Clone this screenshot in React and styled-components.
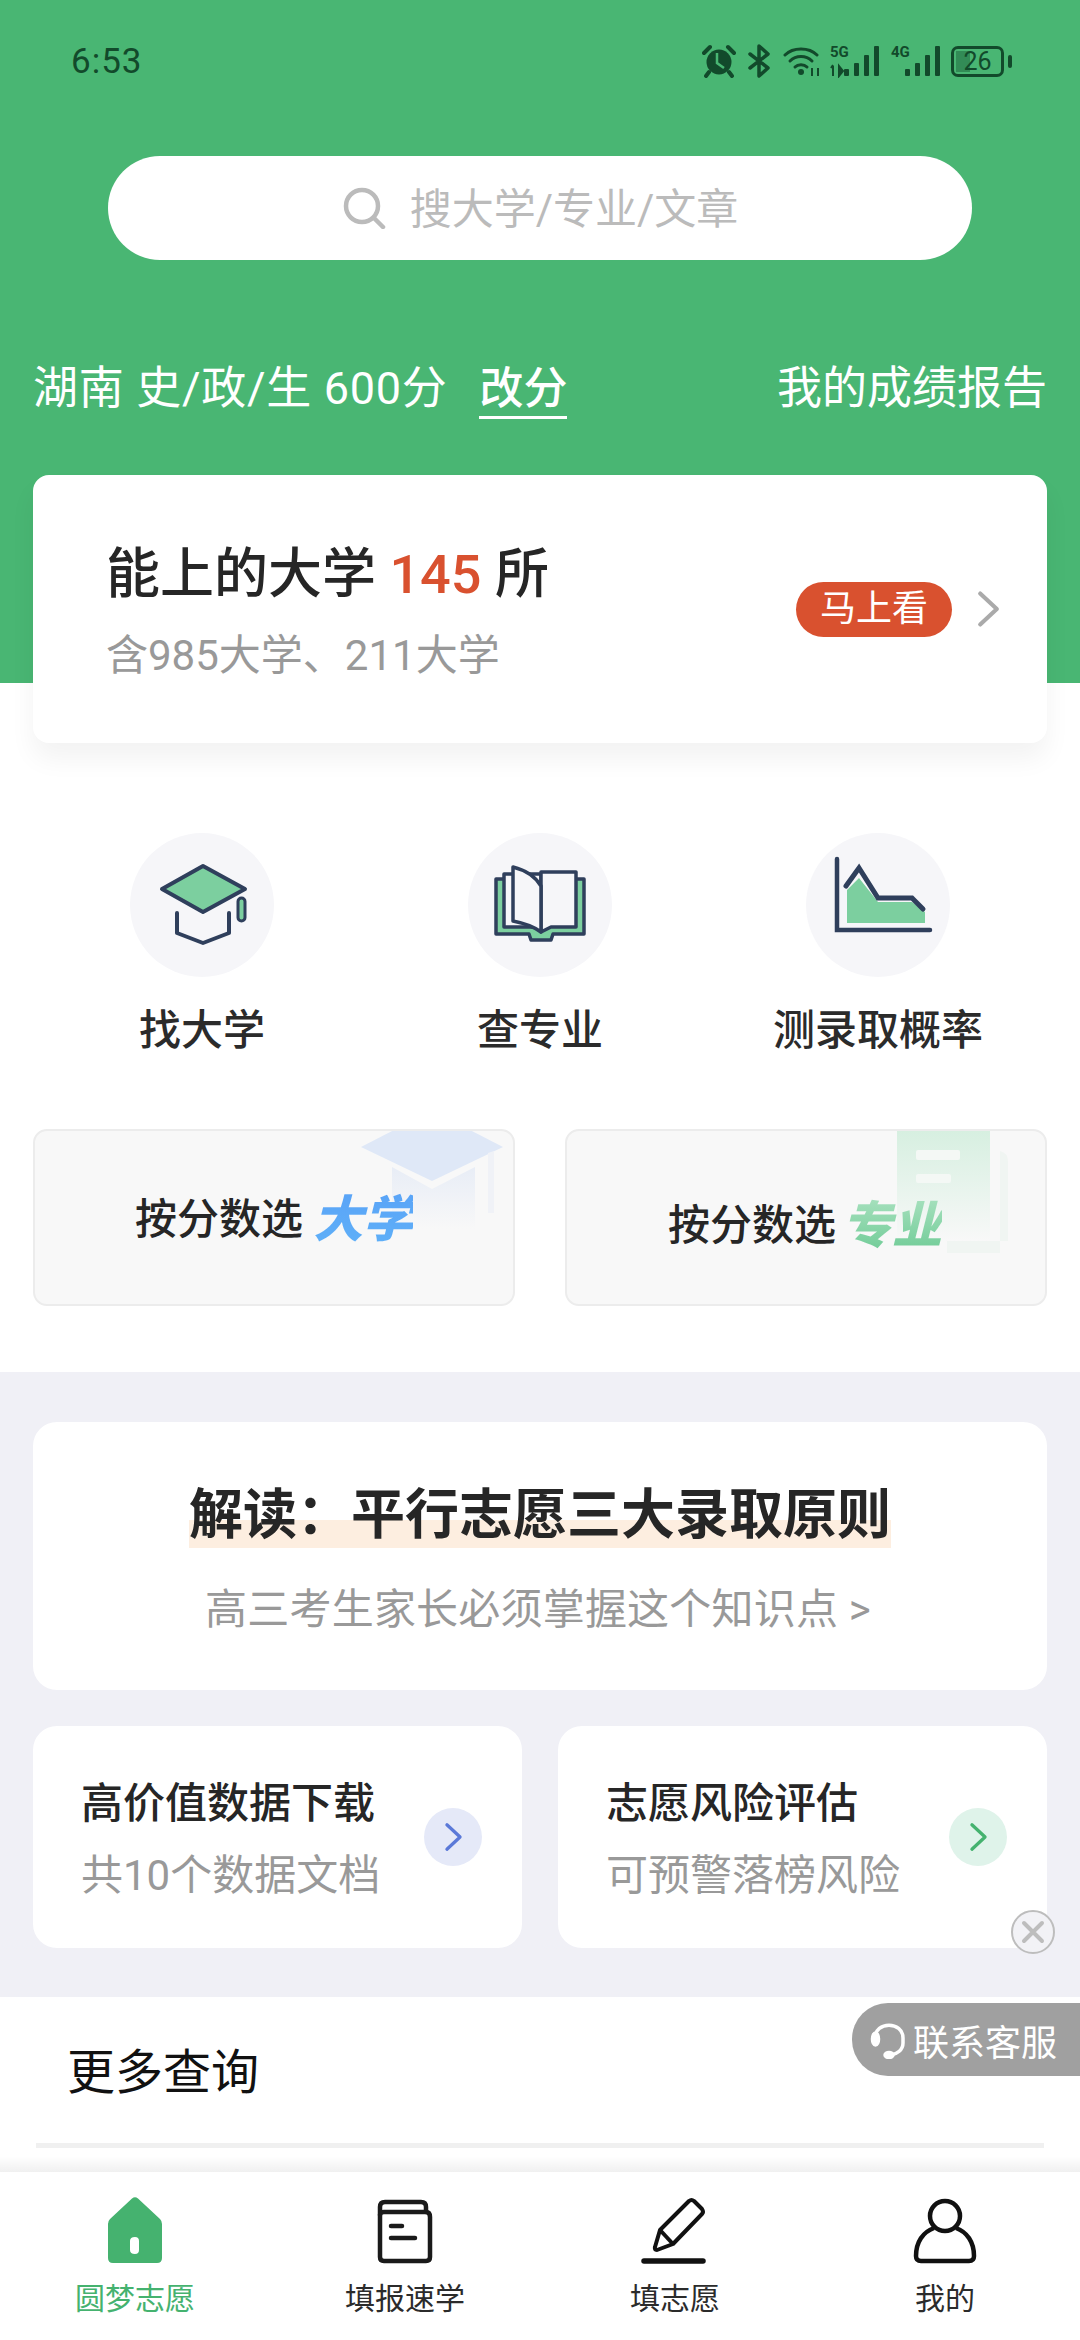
import React from 'react'
import styled, { createGlobalStyle } from 'styled-components'

const GlobalStyle = createGlobalStyle`
  html, body { margin: 0; padding: 0; background: #fff; }
  * { box-sizing: border-box; }
  body { font-family: Roboto, "Noto Sans CJK SC", sans-serif; }
`

const Page = styled.div`
  position: relative;
  width: 1080px;
  height: 2340px;
  overflow: hidden;
  display: flex;
  flex-direction: column;
  background: #fff;
`

const Top = styled.div`
  height: 1372px;
  flex: none;
  padding: 0 33px;
  background: linear-gradient(#49b673 683px, #fff 683px);
`

const StatusBar = styled.div`
  height: 122px;
  margin: 0 -33px;
  padding: 0 76px 0 71px;
  display: flex;
  align-items: center;
  justify-content: space-between;
  color: #124a2b;
`

const Time = styled.span`
  font-size: 35px;
  letter-spacing: 1px;
`

const StatusIcons = styled.div`
  display: flex;
  align-items: center;
`

const Battery = styled.div`
  position: relative;
  width: 53px;
  height: 31px;
  margin-left: 10px;
  border: 3px solid #124a2b;
  border-radius: 7px;
  display: flex;
  align-items: center;
  justify-content: center;
  font-size: 25px;
  line-height: 1;
  &::before {
    content: "";
    position: absolute;
    left: 2px;
    top: 2px;
    bottom: 2px;
    width: 14px;
    background: rgba(18, 74, 43, 0.4);
  }
  &::after {
    content: "";
    position: absolute;
    right: -11px;
    top: 6px;
    width: 4px;
    height: 13px;
    border-radius: 2px;
    background: #124a2b;
  }
`

const Search = styled.div`
  width: 864px;
  height: 104px;
  margin: 34px auto 0;
  border-radius: 52px;
  background: #fff;
  display: flex;
  align-items: center;
  justify-content: center;
  gap: 24px;
  color: #bbb;
  font-size: 42px;
  line-height: 56px;
`

const SearchText = styled.span`
  margin-top: 3px;
`

const InfoRow = styled.div`
  height: 60px;
  margin: 99px 0 0;
  display: flex;
  align-items: center;
  justify-content: space-between;
  color: #fff;
  font-size: 45px;
  line-height: 60px;
`

const InfoLeft = styled.div`
  display: flex;
  align-items: center;
  gap: 32px;
`

const InfoText = styled.span`
  letter-spacing: 0.7px;
`

const ChangeScore = styled.span`
  font-size: 44px;
  font-weight: 500;
  border-bottom: 3px solid #fff;
  line-height: 58px;
  height: 59px;
`

const ResultCard = styled.div`
  height: 268px;
  margin-top: 56px;
  padding: 0 46px 0 73px;
  border-radius: 16px;
  background: #fff;
  box-shadow: 0 16px 26px rgba(0, 0, 0, 0.05);
  display: flex;
  align-items: center;
  justify-content: space-between;
`

const ResultText = styled.div`
  margin-top: 6px;
`

const ResultTitle = styled.div`
  font-size: 54px;
  font-weight: 500;
  line-height: 70px;
  color: #262626;
  b {
    font-weight: 500;
    color: #d9512f;
  }
`

const ResultSub = styled.div`
  margin-top: 18px;
  font-size: 42px;
  line-height: 56px;
  color: #999;
`

const ResultAction = styled.div`
  display: flex;
  align-items: center;
  gap: 24px;
`

const Pill = styled.span`
  width: 156px;
  height: 55px;
  border-radius: 28px;
  background: #d9512f;
  color: #fff;
  font-size: 36px;
  line-height: 55px;
  text-align: center;
`

const Entries = styled.div`
  margin-top: 90px;
  display: grid;
  grid-template-columns: repeat(3, 1fr);
`

const Entry = styled.div`
  display: flex;
  flex-direction: column;
  align-items: center;
  font-size: 42px;
  font-weight: 500;
  line-height: 56px;
  color: #2b2b2b;
`

const EntryIcon = styled.div`
  width: 144px;
  height: 144px;
  margin-bottom: 26px;
  border-radius: 50%;
  background: #f6f6f9;
  display: flex;
  align-items: center;
  justify-content: center;
`

const Pickers = styled.div`
  margin-top: 70px;
  display: flex;
  justify-content: space-between;
`

const Picker = styled.div`
  position: relative;
  overflow: hidden;
  width: 482px;
  height: 177px;
  padding-left: ${props => props.$left}px;
  padding-top: ${props => props.$top}px;
  border: 2px solid #ececec;
  border-radius: 14px;
  background: #f8f8f8;
  display: flex;
  align-items: flex-start;
  gap: ${props => props.$gap}px;
  font-size: 42px;
  font-weight: 500;
  line-height: 56px;
  color: #262626;
`

const Watermark = styled.svg`
  position: absolute;
  top: -2px;
  right: ${props => props.$right}px;
`

const PickerLabel = styled.span`
  position: relative;
`

const PickerAccent = styled.span`
  position: relative;
  font-size: 50px;
  font-weight: 900;
  font-style: italic;
  color: transparent;
  background: ${props => props.$bg};
  -webkit-background-clip: text;
  background-clip: text;
`

const Gray = styled.div`
  height: 625px;
  flex: none;
  padding: 50px 33px 0;
  background: #f0f0f6;
`

const Banner = styled.div`
  height: 268px;
  padding-top: 57px;
  border-radius: 24px;
  background: #fff;
  display: flex;
  flex-direction: column;
  align-items: center;
`

const BannerTitle = styled.span`
  font-size: 54px;
  font-weight: 700;
  line-height: 74px;
  color: #262626;
  background: linear-gradient(transparent 41px, #fdeee0 41px, #fdeee0 69px, transparent 69px);
`

const BannerSub = styled.div`
  margin: 29px 4px 0 0;
  font-size: 42px;
  letter-spacing: 0.2px;
  line-height: 56px;
  color: #999;
`

const Tiles = styled.div`
  margin-top: 36px;
  display: flex;
  justify-content: space-between;
`

const Tile = styled.div`
  width: 489px;
  height: 222px;
  padding: 49px 40px 0 48px;
  border-radius: 24px;
  background: #fff;
  display: flex;
  justify-content: space-between;
  align-items: flex-start;
`

const TileTitle = styled.div`
  font-size: 42px;
  font-weight: 500;
  line-height: 58px;
  color: #262626;
`

const TileSub = styled.div`
  margin-top: 14px;
  font-size: 42px;
  line-height: 58px;
  color: #999;
`

const TileArrow = styled.div`
  width: 58px;
  height: 58px;
  margin-top: 33px;
  border-radius: 50%;
  background: ${props => props.$bg};
  display: flex;
  align-items: center;
  justify-content: center;
`

const More = styled.div`
  height: 175px;
  flex: none;
  padding: 44px 36px 0;
  display: flex;
  flex-direction: column;
`

const MoreTitle = styled.div`
  padding-left: 31px;
  font-size: 48px;
  line-height: 64px;
  color: #111;
`

const MoreRule = styled.div`
  height: 5px;
  margin-top: 38px;
  background: #f0f0f0;
`

const Nav = styled.div`
  flex: 1;
  position: relative;
  padding-top: 23px;
  background: #fff;
  display: grid;
  grid-template-columns: repeat(4, 270px);
  &::before {
    content: "";
    position: absolute;
    left: 0;
    right: 0;
    top: -16px;
    height: 16px;
    background: linear-gradient(rgba(0, 0, 0, 0), rgba(0, 0, 0, 0.06));
  }
`

const NavItem = styled.div`
  display: flex;
  flex-direction: column;
  align-items: center;
  gap: 14px;
  font-size: 30px;
  line-height: 40px;
  color: ${props => (props.$active ? '#45b26f' : '#2b2b2b')};
`

const CloseBadge = styled.div`
  position: absolute;
  left: 1011px;
  top: 1910px;
  width: 44px;
  height: 44px;
  border: 2px solid #bdbdbd;
  border-radius: 50%;
  background: #f2f2f6;
  display: flex;
  align-items: center;
  justify-content: center;
`

const Contact = styled.div`
  position: absolute;
  right: 0;
  top: 2003px;
  width: 228px;
  height: 73px;
  padding-left: 18px;
  border-radius: 36px 0 0 36px;
  background: #a0a0a0;
  display: flex;
  align-items: center;
  gap: 5px;
  color: #fff;
  font-size: 36px;
`

const navy = '#2f3f5c'
const mint = '#7ccf9f'

const HatIcon = () => (
  <svg width="142" height="142" viewBox="0 0 142 142">
    <path d="M72 32 L114 55 L72 78 L31 55 Z" fill={mint} stroke={navy} strokeWidth="4" strokeLinejoin="round" />
    <rect x="107" y="64" width="7" height="23" rx="3.5" fill={mint} stroke={navy} strokeWidth="3" />
    <path d="M46 79 V99 L72 109 L98 99 V79" fill="none" stroke={navy} strokeWidth="4" strokeLinecap="round" strokeLinejoin="round" />
  </svg>
)

const BookIcon = () => (
  <svg width="142" height="142" viewBox="0 0 142 142">
    <path d="M27 45 H115 V100 H84 L82 106 H62 L60 100 H27 Z" fill={mint} stroke={navy} strokeWidth="3.5" strokeLinejoin="round" />
    <path d="M35 40 H72 V94 L62 93 H35 Z" fill="#f6f6f9" stroke={navy} strokeWidth="3.5" strokeLinejoin="round" />
    <path d="M72 38 H107 V93 H82 L72 98 Z" fill="#f6f6f9" stroke={navy} strokeWidth="3.5" strokeLinejoin="round" />
    <path d="M44 33 C56 36 66 42 72 52 V98 C64 92 54 89 44 87 Z" fill="#f6f6f9" stroke={navy} strokeWidth="3.5" strokeLinejoin="round" />
  </svg>
)

const ChartIcon = () => (
  <svg width="142" height="142" viewBox="0 0 142 142">
    <path d="M40 56 L52 44 L71 68 H105 L118 78 V89 H40 Z" fill={mint} />
    <path d="M39 52 L52 34 L71 64 H105 L116 75" fill="none" stroke={navy} strokeWidth="5" strokeLinecap="round" strokeLinejoin="miter" />
    <path d="M30 25 V96 H123" fill="none" stroke={navy} strokeWidth="4.5" strokeLinecap="round" />
  </svg>
)

const HomeIcon = () => (
  <svg width="70" height="70" viewBox="0 0 70 70">
    <path fillRule="evenodd" d="M32 3.5 Q35 1 38 3.5 L60 24 Q62 26 62 29 V63 Q62 68 57 68 H13 Q8 68 8 63 V29 Q8 26 10 24 Z M30 46 V55 Q30 59 35 59 Q39 59 39 55 V46 Q39 42 35 42 Q30 42 30 46 Z" fill="#45b26f" />
  </svg>
)

const StudyIcon = () => (
  <svg width="70" height="70" viewBox="0 0 70 70" fill="none" stroke="#1a1a1a" strokeWidth="4.5" strokeLinecap="round" strokeLinejoin="round">
    <path d="M10 20 V12 Q10 7 15 7 H51 Q56 7 56 12 V17" />
    <path d="M10 20 Q10 17 14 17 H56 Q60 17 60 22 V62 Q60 66 56 66 H14 Q10 66 10 62 Z" />
    <path d="M21 31 H32" />
    <path d="M21 43 H45" />
  </svg>
)

const PenIcon = () => (
  <svg width="70" height="70" viewBox="0 0 70 70" fill="none" stroke="#111" strokeWidth="4" strokeLinejoin="round">
    <path d="M49 6 Q51.500 4 54 6 L62 14 Q64 17 62 19 L33 49 L17 55 Q14 55 15 52 L20 35 Z" />
    <path d="M20 35 L33 49" />
    <path d="M4 66 H63" strokeWidth="5.5" strokeLinecap="round" />
  </svg>
)

const PersonIcon = () => (
  <svg width="70" height="70" viewBox="0 0 70 70" fill="none" stroke="#111" strokeWidth="4.5" strokeLinejoin="round">
    <circle cx="35" cy="21" r="15" />
    <path d="M24 33 C13 37 6 47 6 61 Q6 66 11 66 H59 Q64 66 64 61 C64 47 57 37 46 33" />
  </svg>
)

const AlarmIcon = () => (
  <svg width="34" height="34" viewBox="0 0 34 34">
    <circle cx="17" cy="18" r="12.500" fill="#124a2b" />
    <path d="M2 9 L8 3 M26 3 L32 9 M7 28 L4 32 M27 28 L30 32" stroke="#124a2b" strokeWidth="4" strokeLinecap="round" />
    <path d="M15 9 V19 L22 24" fill="none" stroke="#49b673" strokeWidth="2.500" />
  </svg>
)

const BluetoothIcon = () => (
  <svg width="26" height="34" viewBox="0 0 26 34" style={{ marginLeft: 11 }}>
    <path d="M3 10 L21 24 L12 32 V2 L21 10 L3 24" fill="none" stroke="#124a2b" strokeWidth="3.500" strokeLinejoin="round" strokeLinecap="round" />
  </svg>
)

const WifiIcon = () => (
  <svg width="38" height="34" viewBox="0 0 38 34" style={{ marginLeft: 10 }}>
    <g fill="none" stroke="#124a2b" strokeWidth="3" strokeLinecap="round">
      <path d="M2 11 C10 3 26 3 34 11" />
      <path d="M7 17 C13 11 23 11 29 17" />
      <path d="M12 23 C15 20 21 20 24 23" />
    </g>
    <circle cx="18" cy="28" r="3" fill="#124a2b" />
    <path d="M29 24 V32 M35 24 V32" stroke="#124a2b" strokeWidth="2" />
  </svg>
)

const SignalIcon = ({ label, lower, width, style }) => (
  <svg width={width} height="34" viewBox={`0 0 ${width} 34`} style={style}>
    <text x="0" y="13" fontFamily="Roboto, sans-serif" fontWeight="700" fontSize="15" fill="#124a2b">{label}</text>
    {lower && <path d="M3 22 V32 M1 24 L3 21 M9 22 V32 L13 27 Z" stroke="#124a2b" strokeWidth="2" fill="#124a2b" />}
    <rect x={width - 36} y="25" width="5" height="7" rx="1" fill="#124a2b" />
    <rect x={width - 26} y="19" width="5" height="13" rx="1" fill="#124a2b" />
    <rect x={width - 16} y="11" width="5" height="21" rx="1" fill="#124a2b" />
    <rect x={width - 6} y="2" width="5" height="30" rx="1" fill="#124a2b" />
  </svg>
)

const SearchIcon = () => (
  <svg width="44" height="42" viewBox="0 0 44 42" fill="none" stroke="#bbb" strokeLinecap="round" strokeWidth="4.5">
    <circle cx="20" cy="19" r="16" />
    <path d="M32 31 L41 40" />
  </svg>
)

const Chevron = ({ color, w, h, sw }) => (
  <svg width={w} height={h} viewBox="0 0 20 32" fill="none" stroke={color} strokeWidth={sw} strokeLinecap="round" strokeLinejoin="round">
    <path d="M3 3 L17 16 L3 29" />
  </svg>
)

const Headset = () => (
  <svg width="38" height="38" viewBox="0 0 38 38" fill="none" stroke="#fff" strokeWidth="3.5" strokeLinecap="round">
    <path d="M5 20 V17 C5 0 33 0 33 17 V22 C33 29 27 33 21 34" />
    <ellipse cx="5.500" cy="18" rx="3" ry="6" fill="#fff" />
    <ellipse cx="19" cy="34" rx="4" ry="2.500" fill="#fff" />
  </svg>
)

function App() {
  return (
    <Page>
      <GlobalStyle />
      <Top>
        <StatusBar>
          <Time>6:53</Time>
          <StatusIcons>
            <AlarmIcon />
            <BluetoothIcon />
            <WifiIcon />
            <SignalIcon label="5G" lower width={50} style={{ marginLeft: 9 }} />
            <SignalIcon label="4G" width={50} style={{ marginLeft: 11 }} />
            <Battery>26</Battery>
          </StatusIcons>
        </StatusBar>
        <Search>
          <SearchIcon />
          <SearchText>搜大学/专业/文章</SearchText>
        </Search>
        <InfoRow>
          <InfoLeft>
            <InfoText>湖南 史/政/生 600分</InfoText>
            <ChangeScore>改分</ChangeScore>
          </InfoLeft>
          <span>我的成绩报告</span>
        </InfoRow>
        <ResultCard>
          <ResultText>
            <ResultTitle>能上的大学 <b>145</b> 所</ResultTitle>
            <ResultSub>含985大学、211大学</ResultSub>
          </ResultText>
          <ResultAction>
            <Pill>马上看</Pill>
            <Chevron color="#aaa" w={25} h={38} sw={3.5} />
          </ResultAction>
        </ResultCard>
        <Entries>
          <Entry><EntryIcon><HatIcon /></EntryIcon>找大学</Entry>
          <Entry><EntryIcon><BookIcon /></EntryIcon>查专业</Entry>
          <Entry><EntryIcon><ChartIcon /></EntryIcon>测录取概率</Entry>
        </Entries>
        <Pickers>
          <Picker $left={100} $top={61} $gap={10}>
            <Watermark $right={9} width="144" height="110" viewBox="0 0 144 110">
              <defs>
                <linearGradient id="hatFade" x1="0" y1="0" x2="0" y2="1">
                  <stop offset="0" stopColor="#e8edf6" />
                  <stop offset="1" stopColor="#f8f8f8" />
                </linearGradient>
              </defs>
              <path d="M32 38 L72 60 L115 38 V100 H32 Z" fill="url(#hatFade)" />
              <path d="M36 0 H108 L143 18 L72 52 L1 18 Z" fill="#dfe8f7" />
              <path d="M128 24 V84 H134 V22 Z" fill="#f0f2f7" />
            </Watermark>
            <PickerLabel>按分数选</PickerLabel>
            <PickerAccent $bg="linear-gradient(#5aa4f7, #5fb0f8)">大学</PickerAccent>
          </Picker>
          <Picker $left={101} $top={67} $gap={6}>
            <Watermark $right={34} width="114" height="126" viewBox="0 0 114 126">
              <defs>
                <linearGradient id="docFade" x1="0" y1="0" x2="0" y2="1">
                  <stop offset="0" stopColor="#d6efe0" />
                  <stop offset="1" stopColor="#f8f8f8" />
                </linearGradient>
              </defs>
              <rect x="0" y="0" width="93" height="112" fill="url(#docFade)" />
              <rect x="19" y="21" width="44" height="10" rx="2" fill="#f4f8f5" />
              <rect x="19" y="45" width="35" height="9" rx="2" fill="#f4f8f5" />
              <path d="M103 22 Q111 24 111 32 V112 H50 V124 H103 Z" fill="#f0f5f2" />
            </Watermark>
            <PickerLabel>按分数选</PickerLabel>
            <PickerAccent $bg="linear-gradient(#a6e0bd, #6fcb96)">专业</PickerAccent>
          </Picker>
        </Pickers>
      </Top>
      <Gray>
        <Banner>
          <BannerTitle>{'解读\uFF1A平行志愿三大录取原则'}</BannerTitle>
          <BannerSub>高三考生家长必须掌握这个知识点 &gt;</BannerSub>
        </Banner>
        <Tiles>
          <Tile>
            <div>
              <TileTitle>高价值数据下载</TileTitle>
              <TileSub>共10个数据文档</TileSub>
            </div>
            <TileArrow $bg="#e5e9f8"><Chevron color="#5b79d8" w={19} h={30} sw={3.5} /></TileArrow>
          </Tile>
          <Tile>
            <div>
              <TileTitle>志愿风险评估</TileTitle>
              <TileSub>可预警落榜风险</TileSub>
            </div>
            <TileArrow $bg="#dff3ea"><Chevron color="#45b26f" w={19} h={30} sw={3.5} /></TileArrow>
          </Tile>
        </Tiles>
      </Gray>
      <More>
        <MoreTitle>更多查询</MoreTitle>
        <MoreRule />
      </More>
      <Nav>
        <NavItem $active><HomeIcon />圆梦志愿</NavItem>
        <NavItem><StudyIcon />填报速学</NavItem>
        <NavItem><PenIcon />填志愿</NavItem>
        <NavItem><PersonIcon />我的</NavItem>
      </Nav>
      <CloseBadge>
        <svg width="24" height="24" viewBox="0 0 24 24" stroke="#bdbdbd" strokeWidth="4" strokeLinecap="round">
          <path d="M3 3 L21 21 M21 3 L3 21" />
        </svg>
      </CloseBadge>
      <Contact>
        <Headset />
        联系客服
      </Contact>
    </Page>
  )
}

export default App
